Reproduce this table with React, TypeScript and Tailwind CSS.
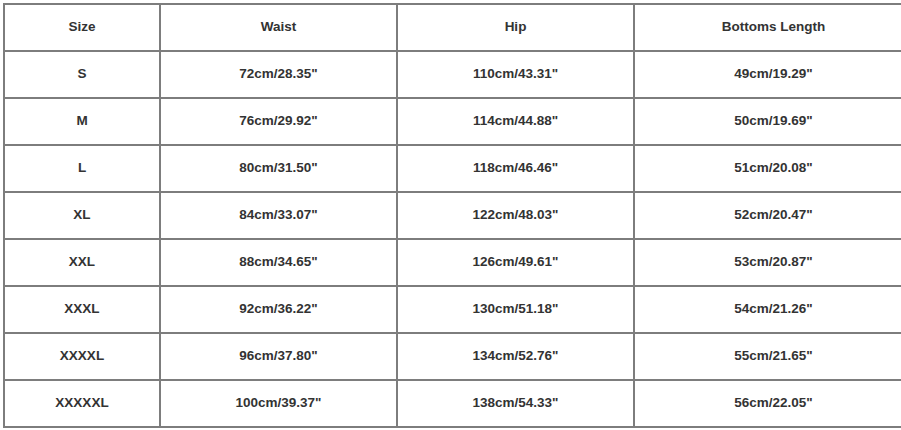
const header = ['Size', 'Waist', 'Hip', 'Bottoms Length'];

const rows = [
  ['S', '72cm/28.35"', '110cm/43.31"', '49cm/19.29"'],
  ['M', '76cm/29.92"', '114cm/44.88"', '50cm/19.69"'],
  ['L', '80cm/31.50"', '118cm/46.46"', '51cm/20.08"'],
  ['XL', '84cm/33.07"', '122cm/48.03"', '52cm/20.47"'],
  ['XXL', '88cm/34.65"', '126cm/49.61"', '53cm/20.87"'],
  ['XXXL', '92cm/36.22"', '130cm/51.18"', '54cm/21.26"'],
  ['XXXXL', '96cm/37.80"', '134cm/52.76"', '55cm/21.65"'],
  ['XXXXXL', '100cm/39.37"', '138cm/54.33"', '56cm/22.05"'],
];

export default function App() {
  return (
    <div className="w-[901px] h-[430px] overflow-hidden bg-white pt-[3px] pl-[3px] font-['Liberation_Sans',Arial,sans-serif]">
      <div className="w-[960px] grid grid-cols-[154px_235px_235px_1fr] auto-rows-[45px] gap-[2px] p-[2px] bg-[#7d7d7d]">
        {[header, ...rows].map((row, i) =>
          row.map((cell, j) => (
            <div
              key={`${i}-${j}`}
              className={`bg-white flex items-center justify-center text-[13.5px] font-bold text-[#333333] ${
                j === 3 ? 'pr-[49px]' : ''
              }`}
            >
              {cell}
            </div>
          ))
        )}
      </div>
    </div>
  );
}
